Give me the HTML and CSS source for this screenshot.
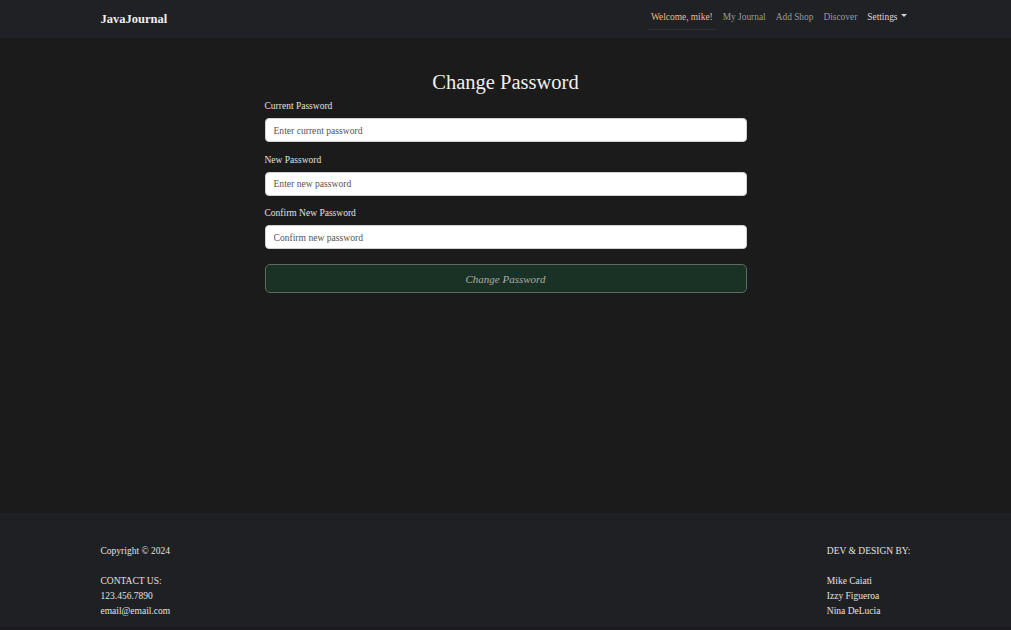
FILE: index.html
```html
<!DOCTYPE html>
<html lang="en">
<head>
<meta charset="utf-8">
<title>JavaJournal - Change Password</title>
<link rel="stylesheet" href="styles.css">
</head>
<body>
<nav class="navbar">
  <div class="container nav-inner">
    <a class="brand" href="#">JavaJournal</a>
    <ul class="nav-links">
      <li><a class="nav-link welcome" href="#">Welcome, mike!</a></li>
      <li><a class="nav-link" href="#">My Journal</a></li>
      <li><a class="nav-link" href="#">Add Shop</a></li>
      <li><a class="nav-link" href="#">Discover</a></li>
      <li><a class="nav-link settings" href="#">Settings<span class="caret"></span></a></li>
    </ul>
  </div>
</nav>
<main class="main">
  <form class="pw-form">
    <h1 class="title">Change Password</h1>
    <div class="field">
      <label class="label" for="cur">Current Password</label>
      <input class="input" id="cur" type="password" placeholder="Enter current password">
    </div>
    <div class="field">
      <label class="label" for="new">New Password</label>
      <input class="input" id="new" type="password" placeholder="Enter new password">
    </div>
    <div class="field">
      <label class="label" for="conf">Confirm New Password</label>
      <input class="input" id="conf" type="password" placeholder="Confirm new password">
    </div>
    <button class="btn" type="button">Change Password</button>
  </form>
</main>
<footer class="footer">
  <div class="container footer-inner">
    <div class="footer-col">
      <p class="line">Copyright © 2024</p>
      <p class="line gap">CONTACT US:</p>
      <p class="line">123.456.7890</p>
      <p class="line">email@email.com</p>
    </div>
    <div class="footer-col">
      <p class="line">DEV &amp; DESIGN BY:</p>
      <p class="line gap">Mike Caiati</p>
      <p class="line">Izzy Figueroa</p>
      <p class="line">Nina DeLucia</p>
    </div>
  </div>
</footer>
</body>
</html>
```
FILE: styles.css
```css
* { box-sizing: border-box; }
html, body { margin: 0; padding: 0; }
body {
  font-family: "Liberation Serif", "Times New Roman", serif;
  background: #1b1b1b;
  color: #e6e6e6;
  font-size: 10px;
}
.container {
  width: 810px;
  margin: 0 auto;
}
.navbar {
  background: #202125;
  height: 38px;
}
.nav-inner {
  height: 38px;
  display: flex;
  align-items: center;
  justify-content: space-between;
}
.brand {
  color: #eeeeee;
  font-weight: bold;
  font-size: 12.5px;
  text-decoration: none;
}
.nav-links {
  list-style: none;
  margin: 0 4px 0 0;
  padding: 0;
  display: flex;
  gap: 10px;
  align-self: stretch;
  align-items: stretch;
}
.nav-links li { display: flex; }
.nav-link {
  display: flex;
  align-items: center;
  padding: 0 0 5px;
  color: #9a9a9a;
  text-decoration: none;
  font-size: 9.4px;
}
.nav-link.welcome {
  color: #ecb99a;
  border-bottom: 1px solid #2c2e33;
  padding: 9px 4px 4px;
  margin: 0 -4px 8px;
}
.nav-link.settings { color: #d6d6d6; }
.caret {
  display: inline-block;
  width: 0;
  height: 0;
  border-left: 3px solid transparent;
  border-right: 3px solid transparent;
  border-top: 3px solid #d6d6d6;
  margin-left: 3px;
  margin-bottom: 3px;
}
.main {
  min-height: 475px;
  padding-top: 30px;
}
.pw-form {
  width: 482px;
  margin: 0 auto;
  display: flex;
  flex-direction: column;
}
.title {
  margin: 0 0 3px;
  font-size: 20.5px;
  font-weight: normal;
  text-align: center;
  color: #efefef;
  line-height: 28px;
}
.field {
  display: flex;
  flex-direction: column;
  margin-bottom: 10.5px;
}
.label {
  font-size: 9.5px;
  color: #e0e0e0;
  line-height: 14px;
  margin-bottom: 5px;
}
.input {
  height: 24px;
  border: 1px solid #d0d0d0;
  border-radius: 4px;
  background: #ffffff;
  padding: 0 8px;
  font-family: inherit;
  font-size: 9.6px;
  color: #333;
}
.input::placeholder { color: #555; }
.btn {
  margin-top: 4.5px;
  height: 29px;
  background: #1a3226;
  border: 1px solid #5d6b63;
  border-radius: 5px;
  color: #a7aca9;
  font-family: inherit;
  font-style: italic;
  font-size: 11px;
}
.footer {
  background: #1f2024;
  padding: 31px 0 8px;
}
.footer-inner {
  display: flex;
  justify-content: space-between;
}
.footer-col { min-width: 82px; }
.line {
  margin: 0;
  font-size: 9.5px;
  line-height: 15px;
  color: #e2e2e2;
}
.line.gap { margin-top: 15px; }
```
